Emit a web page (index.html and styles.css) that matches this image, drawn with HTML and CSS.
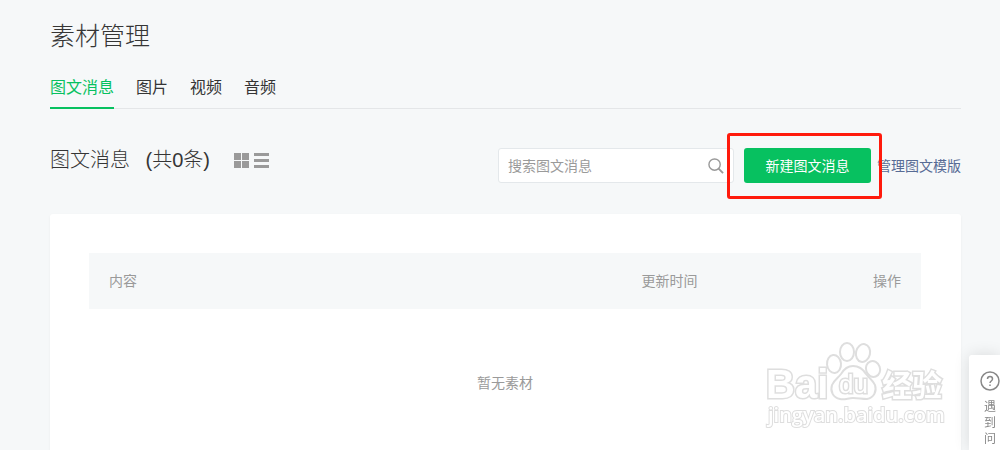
FILE: index.html
```html
<!DOCTYPE html>
<html lang="zh-CN">
  <head>
    <meta charset="utf-8" />
    <title>素材管理</title>
    <link rel="stylesheet" href="styles.css">
  </head>

  <body>
    <main class="page">
      <h1 class="page-title">素材管理</h1>

      <nav class="tabs">
        <a class="tab active" href="#">图文消息</a>
        <a class="tab" href="#">图片</a>
        <a class="tab" href="#">视频</a>
        <a class="tab" href="#">音频</a>
      </nav>

      <div class="toolbar">
        <h2 class="list-title">图文消息 <span class="count">(共0条)</span></h2>
        <div class="views">
          <button class="view" type="button" aria-label="卡片视图">
            <svg width="15" height="15" viewBox="0 0 15 15">
              <path d="M0 0h7v7H0zM8 0h7v7H8zM0 8h7v7H0zM8 8h7v7H8z" />
            </svg>
          </button>
          <button class="view" type="button" aria-label="列表视图">
            <svg width="15" height="15" viewBox="0 0 15 15">
              <path d="M0 0h15v3H0zM0 6h15v3H0zM0 12h15v3H0z" />
            </svg>
          </button>
        </div>

        <form class="search">
          <input class="search-input" type="text" placeholder="搜索图文消息" aria-label="搜索图文消息" />
          <button class="search-btn" type="button" aria-label="搜索">
            <svg width="16" height="16" viewBox="0 0 17 17">
              <circle cx="7" cy="7" r="6" />
              <path class="handle" d="M11 11l5 5" />
            </svg>
          </button>
        </form>

        <div class="create">
          <button class="create-btn" type="button">新建图文消息</button>
          <span class="highlight"></span>
        </div>
        <a class="template-link" href="#">管理图文模版</a>
      </div>

      <section class="card">
        <table class="list">
          <thead>
            <tr>
              <th class="col-content">内容</th>
              <th class="col-time">更新时间</th>
              <th class="col-action">操作</th>
            </tr>
          </thead>
          <tbody>
            <tr>
              <td class="empty" colspan="3">暂无素材</td>
            </tr>
          </tbody>
        </table>
      </section>
    </main>

    <svg class="watermark" width="190" height="100" viewBox="0 0 190 100">
      <text class="wm-bai" x="2" y="58">Bai</text>
      <ellipse cx="70" cy="24" rx="7" ry="9" transform="rotate(-6 70 24)" />
      <ellipse cx="83" cy="12" rx="7" ry="9" />
      <ellipse cx="99" cy="13" rx="7" ry="9" transform="rotate(12 99 13)" />
      <ellipse cx="109" cy="29" rx="7" ry="8" transform="rotate(-20 109 29)" />
      <path d="M89 26c-6 0-9 3-12 8-3 4-7 6-9 11-2 6 1 13 8 14 5 1 8-1 13-1s9 1 14 1c7-1 10-8 8-14-2-5-6-7-9-11-3-5-7-8-13-8z" />
      <text class="wm-du" x="75" y="53">du</text>
      <text class="wm-cn" x="118" y="56">经验</text>
      <text class="wm-url" x="4" y="82">jingyan.baidu.com</text>
    </svg>

    <aside class="help">
      <svg class="help-icon" width="20" height="20" viewBox="0 0 20 20">
        <circle cx="10" cy="10" r="9" />
        <path d="M7.5 8c0-3.4 5-3.4 5 0 0 2-2.5 2-2.5 4M10 13.5V15" />
      </svg>
      <span class="help-text">遇到问</span>
    </aside>
  </body>
</html>
```

FILE: styles.css
```css
* {
  box-sizing: border-box;
  margin: 0;
  padding: 0;
}

body {
  font-family: "Liberation Sans", "Noto Sans CJK SC", sans-serif;
  font-size: 14px;
  line-height: 20px;
  color: #353535;
  background-color: #f6f8f9;
}

a {
  color: inherit;
  text-decoration: none;
}

button {
  font: inherit;
  border: 0;
  background: none;
}

.page {
  display: flex;
  flex-direction: column;
  min-height: 100vh;
  padding: 18px 39px 0 50px;
}

.page-title {
  font-size: 25px;
  font-weight: 300;
  line-height: 36px;
}

.tabs {
  display: flex;
  gap: 22px;
  margin-top: 16px;
  border-bottom: 1px solid #e4e6e8;
}

.tab {
  height: 39px;
  margin-bottom: -1px;
  font-size: 16px;
  line-height: 36px;
}

.active {
  color: #07c160;
  border-bottom: 2px solid #07c160;
}

/* title, view switch, search and actions */
.toolbar {
  display: flex;
  align-items: center;
  margin-top: 39px;
}

.list-title {
  font-size: 20px;
  font-weight: 300;
  line-height: 24px;
  margin-bottom: 11px;
}

.count {
  margin-left: 10px;
}

.views {
  display: flex;
  gap: 5px;
  margin: 0 auto 10px 24px;
}

.view {
  height: 15px;
  fill: #9a9a9a;
}

.view svg {
  display: block;
}

.search {
  display: flex;
  align-items: center;
  width: 236px;
  height: 35px;
  padding: 0 9px;
  border: 1px solid #e4e8eb;
  border-radius: 3px;
  background-color: #fff;
}

.search-input {
  flex: 1;
  min-width: 0;
  font: inherit;
  border: 0;
  outline: 0;
}

.search-input::placeholder {
  color: #9a9a9a;
}

.search-btn {
  height: 16px;
  fill: none;
  stroke: #9a9a9a;
  stroke-width: 1.5;
}

.search-btn svg {
  display: block;
}

.handle {
  stroke-width: 2;
}

.create {
  position: relative;
  margin: 0 6px 0 10px;
}

.create-btn {
  display: block;
  width: 127px;
  height: 35px;
  color: #fff;
  border-radius: 3px;
  background-color: #07c160;
}

.highlight {
  position: absolute;
  top: -15px;
  right: -11px;
  bottom: -16px;
  left: -17px;
  border: 3px solid #ff1a0c;
  border-radius: 3px;
  pointer-events: none;
}

.template-link {
  color: #576b95;
}

.card {
  flex: 1;
  margin-top: 31px;
  padding: 39px 40px 0 39px;
  border-radius: 3px 3px 0 0;
  background-color: #fff;
  box-shadow: 0 1px 3px rgba(0, 0, 0, 0.05);
}

.list {
  width: 100%;
  border-collapse: collapse;
  color: #9a9a9a;
}

.list th {
  height: 56px;
  padding: 0 20px;
  font-weight: 400;
  text-align: left;
  background-color: #f6f8f9;
}

.list .col-time {
  width: 22%;
}

.list .col-action {
  width: 14%;
  text-align: right;
}

.empty {
  padding-top: 64px;
  text-align: center;
}

/* outlined logo, the stroke sits behind the white fill */
.watermark {
  position: fixed;
  right: 46px;
  bottom: 10px;
  fill: #fff;
  stroke: #dedede;
  stroke-width: 2;
  pointer-events: none;
}

.watermark text {
  font-weight: 700;
  stroke-width: 3;
  paint-order: stroke;
}

.wm-bai {
  font-size: 40px;
}

.watermark .wm-du {
  font-size: 26px;
  font-weight: 400;
}

.wm-cn {
  font-size: 30px;
}

.watermark .wm-url {
  font-family: "Open Sans", "Liberation Sans", sans-serif;
  font-size: 20px;
  font-weight: 600;
  stroke-width: 2;
}

.help {
  position: fixed;
  right: 0;
  bottom: 0;
  width: 31px;
  height: 95px;
  padding: 16px 0 0 11px;
  border-radius: 3px 0 0 0;
  background-color: #fff;
  box-shadow: 0 0 16px rgba(0, 0, 0, 0.12);
}

.help-icon {
  display: block;
  fill: none;
  stroke: #888;
  stroke-width: 1.5;
}

.help-text {
  display: block;
  width: 12px;
  margin: 8px 0 0 4px;
  font-size: 12px;
  line-height: 16px;
  color: #888;
}
```
